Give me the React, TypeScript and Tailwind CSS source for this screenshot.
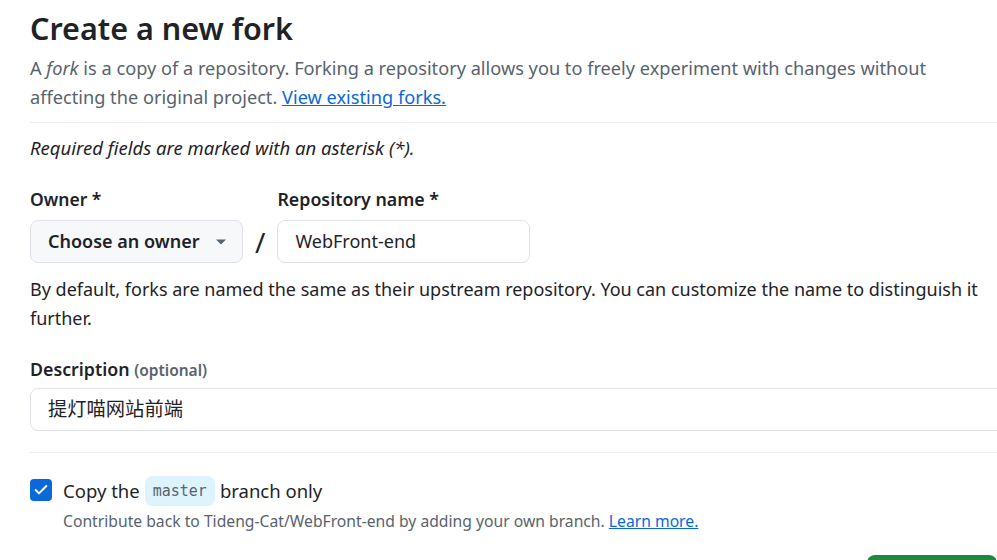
import { Check } from "lucide-react"

const sans = { fontFamily: '"Noto Sans", "Noto Sans CJK SC", sans-serif' }

const App = () => {
  return (
    <div className="h-[560px] w-[997px] overflow-hidden bg-white text-[#1f2328]" style={sans}>
      <div className="pl-[30px] -mr-[10px]">
        {/* header */}
        <h1 className="pt-[9px] text-[30.5px] font-semibold leading-[38px]">Create a new fork</h1>
        <p className="mt-[7px] max-w-[920px] text-[18.2px] leading-[29px] text-[#59636e]">
          A <em>fork</em> is a copy of a repository. Forking a repository allows you to freely experiment with changes without affecting the original project.{" "}
          <a className="text-[#0969da] underline" href="#">View existing forks.</a>
        </p>
        <div className="mt-[10px] h-px bg-[#eaedf0]" />

        <p className="mt-[12px] text-[18.5px] italic leading-[26px]">Required fields are marked with an asterisk (*).</p>

        {/* owner / name */}
        <div className="mt-[25px] flex items-end gap-[10px]">
          <div>
            <div className="text-[17.5px] font-semibold leading-[26px]">Owner *</div>
            <button className="mt-[8px] flex h-[43px] w-[213px] items-center justify-between rounded-[8px] border border-[#dfe3e8] bg-[#f6f8fa] pl-[17px] pr-[15px] text-[18px] font-semibold">
              Choose an owner
              <svg width="12" height="8" viewBox="0 0 12 8"><path d="M1 1.5h10L6 6.5z" fill="#59636e" /></svg>
            </button>
          </div>
          <div className="flex h-[43px] items-center px-[2px] text-[28px] leading-none">/</div>
          <div>
            <div className="text-[17.8px] font-semibold leading-[26px]">Repository name *</div>
            <div className="mt-[8px] flex h-[43px] w-[253px] items-center rounded-[8px] border border-[#dfe3e8] pl-[17px] text-[18px]">WebFront-end</div>
          </div>
        </div>
        <p className="mt-[12px] max-w-[955px] text-[18px] leading-[29px]">
          By default, forks are named the same as their upstream repository. You can customize the name to distinguish it further.
        </p>

        {/* description */}
        <div className="mt-[23px] text-[17.8px] font-semibold leading-[26px]">
          Description <span className="text-[15.5px] font-semibold text-[#59636e]">(optional)</span>
        </div>
        <div className="mt-[5px] flex h-[43px] items-center rounded-[8px] border border-[#dfe3e8] pl-[17px] text-[19.3px]">提灯喵网站前端</div>
        <div className="mt-[21px] h-px bg-[#eaedf0]" />

        {/* branch option */}
        <div className="mt-[23px] flex items-start gap-[11px]">
          <div className="mt-[3px] flex h-[22px] w-[22px] items-center justify-center rounded-[4px] bg-[#0969da]">
            <Check size={16} strokeWidth={3} color="white" />
          </div>
          <div>
            <div className="flex items-center text-[18.5px] leading-[30px]">
              Copy the
              <code className="mx-[5px] rounded-[7px] bg-[#ddf4ff] px-[8px] text-[15px] leading-[30px] text-[#59636e]" style={{ fontFamily: '"DejaVu Sans Mono", monospace' }}>master</code>
              branch only
            </div>
            <p className="mt-[2px] text-[15.7px] leading-[26px] text-[#59636e]">
              Contribute back to Tideng-Cat/WebFront-end by adding your own branch.{" "}
              <a className="text-[#0969da] underline" href="#">Learn more.</a>
            </p>
          </div>
        </div>

        <div className="mt-[21px] flex justify-end pr-[10px]">
          <button className="h-[40px] w-[130px] rounded-[8px] bg-[#1f883d]" />
        </div>
      </div>
    </div>
  )
}

export default App
